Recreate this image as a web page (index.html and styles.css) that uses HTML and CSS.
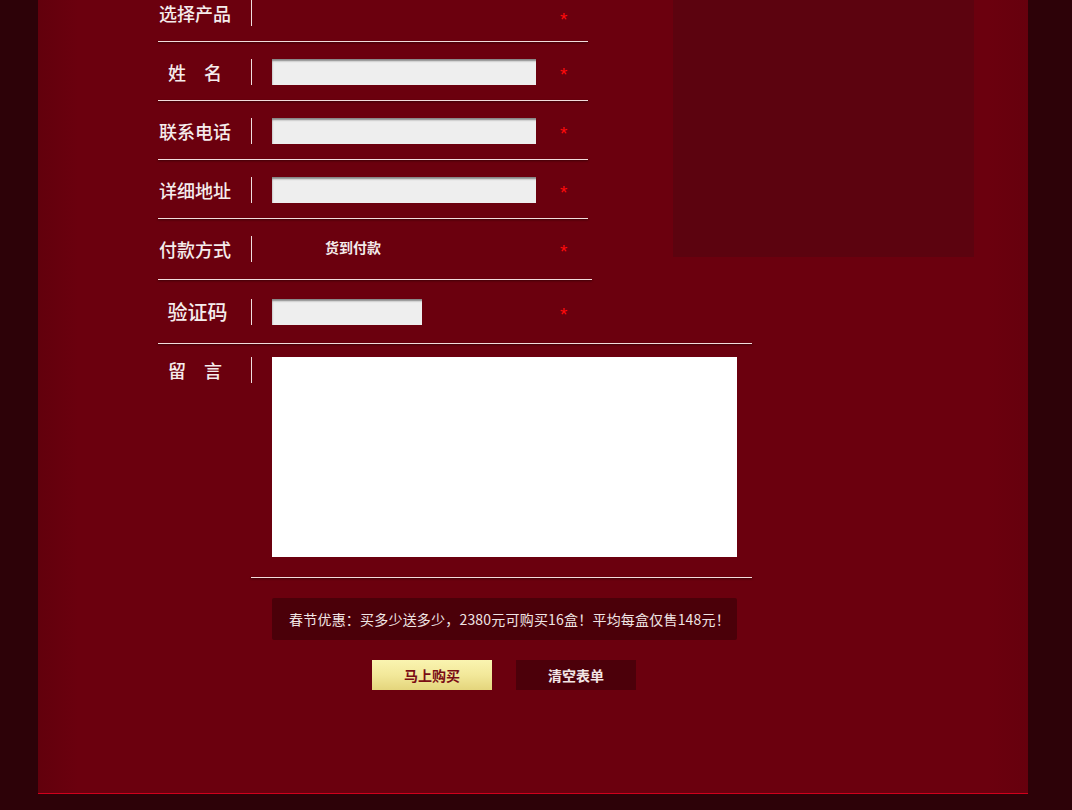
FILE: index.html
```html
<!DOCTYPE html>
<html lang="zh-CN">
<head>
<meta charset="utf-8">
<title>订购表单</title>
<link rel="stylesheet" href="styles.css">
</head>
<body>
<div class="page">
  <div class="panel">
    <div class="inner">
      <aside class="side"></aside>
      <form class="order">
        <div class="row first">
          <span class="label">选择产品</span><span class="bar"></span>
          <span class="field"></span><span class="star">*</span>
        </div>
        <div class="rule w430"></div>
        <div class="row">
          <span class="label">姓<span class="gap"></span>名</span><span class="bar"></span>
          <span class="field"><input class="txt" type="text"></span><span class="star">*</span>
        </div>
        <div class="rule w430"></div>
        <div class="row">
          <span class="label">联系电话</span><span class="bar"></span>
          <span class="field"><input class="txt" type="text"></span><span class="star">*</span>
        </div>
        <div class="rule w430"></div>
        <div class="row">
          <span class="label">详细地址</span><span class="bar"></span>
          <span class="field"><input class="txt" type="text"></span><span class="star">*</span>
        </div>
        <div class="rule w430"></div>
        <div class="row pay">
          <span class="label">付款方式</span><span class="bar"></span>
          <span class="field"><span class="cod">货到付款</span></span><span class="star">*</span>
        </div>
        <div class="rule w434"></div>
        <div class="row code">
          <span class="label big">验证码</span><span class="bar"></span>
          <span class="field"><input class="txt short" type="text"></span><span class="star">*</span>
        </div>
        <div class="rule w594"></div>
        <div class="row msg">
          <span class="label">留<span class="gap"></span>言</span><span class="bar"></span>
          <textarea class="area"></textarea>
        </div>
        <div class="rule w501 indent"></div>
        <div class="promo">春节优惠：买多少送多少，2380元可购买16盒！平均每盒仅售148元！</div>
        <div class="actions">
          <button type="button" class="btn buy">马上购买</button>
          <button type="button" class="btn clear">清空表单</button>
        </div>
      </form>
    </div>
  </div>
</div>
</body>
</html>
```
FILE: styles.css
```css
html, body {
  margin: 0;
  padding: 0;
}
body {
  background: #2d0208;
  font-family: "Noto Sans CJK SC", "Microsoft YaHei", sans-serif;
  width: 1072px;
  height: 810px;
  overflow: hidden;
}
.page {
  padding-left: 38px;
}
.panel {
  width: 990px;
  height: 794px;
  background: linear-gradient(90deg, #62000c 0px, #6b000e 40px, #6b000e 950px, #66000d 990px);
  border-bottom: 1px solid #d0001c;
  box-sizing: border-box;
}
.inner {
  padding-left: 120px;
}
.side {
  float: right;
  width: 301px;
  height: 257px;
  margin-right: 54px;
  background: #5c030f;
}
.order {
  display: flex;
  flex-direction: column;
  align-items: flex-start;
}
.row {
  display: flex;
  align-items: center;
  padding: 17px 0 15px;
  height: 26px;
}
.row.first {
  padding-top: 0;
}
.row.first .star {
  margin-top: 12px;
}
.row.pay {
  padding-bottom: 17px;
}
.row.code {
  padding: 19px 0 18px;
}
.row.msg {
  align-items: flex-start;
  padding: 13px 0 20px;
  height: 200px;
}
.label {
  width: 74px;
  display: flex;
  justify-content: center;
  color: #f5ecec;
  font-size: 18px;
  font-weight: 500;
  line-height: 26px;
  white-space: nowrap;
}
.gap {
  display: inline-block;
  width: 18px;
}
.label.big {
  font-size: 20px;
  padding-left: 5px;
  box-sizing: border-box;
}
.bar {
  width: 1px;
  height: 26px;
  background: #f0dede;
  margin-left: 19px;
  margin-right: 20px;
}
.field {
  width: 288px;
  height: 26px;
  display: flex;
  align-items: center;
}
.txt {
  width: 264px;
  height: 26px;
  border: 0;
  padding: 0;
  margin: 0;
  background: #eeeeee;
  box-shadow: inset 1px 3px 2px -1px rgba(0, 0, 0, 0.45);
  box-sizing: border-box;
}
.txt.short {
  width: 150px;
}
.cod {
  margin-left: 53px;
  color: #f4eaea;
  font-size: 14px;
  font-weight: 700;
  margin-top: -4px;
}
.star {
  color: #ff0a0a;
  font-size: 19px;
  line-height: 1;
  margin-top: 5px;
  font-family: "Liberation Sans", sans-serif;
}
.area {
  width: 465px;
  height: 200px;
  border: 0;
  padding: 0;
  margin: 0;
  background: #ffffff;
  resize: none;
  box-sizing: border-box;
}
.rule {
  height: 1px;
  background: #f2dcdc;
  box-shadow: 0 1px 2px rgba(35, 0, 5, 0.85);
}
.w430 { width: 430px; }
.w434 { width: 434px; }
.w594 { width: 594px; }
.w501 { width: 501px; }
.indent { margin-left: 93px; }
.promo {
  margin: 20px 0 0 114px;
  width: 465px;
  height: 42px;
  padding-left: 10px;
  box-sizing: border-box;
  background: #4b0009;
  border-radius: 2px;
  color: #f0e4e4;
  font-family: "Noto Sans CJK TC", "Noto Sans CJK SC", sans-serif;
  font-size: 14px;
  line-height: 42px;
  text-align: center;
  letter-spacing: 0.2px;
  white-space: nowrap;
}
.actions {
  margin: 20px 0 0 214px;
  display: flex;
  gap: 24px;
}
.btn {
  width: 120px;
  height: 30px;
  border: 0;
  padding: 0;
  margin: 0;
  font-family: "Noto Sans CJK SC", sans-serif;
  font-size: 14px;
  font-weight: 700;
  cursor: pointer;
}
.buy {
  background: linear-gradient(180deg, #faf4b0 0%, #f2e89a 50%, #e4d57c 100%);
  color: #7a0c14;
}
.clear {
  background: #4c000a;
  color: #f3e6e6;
}
```
